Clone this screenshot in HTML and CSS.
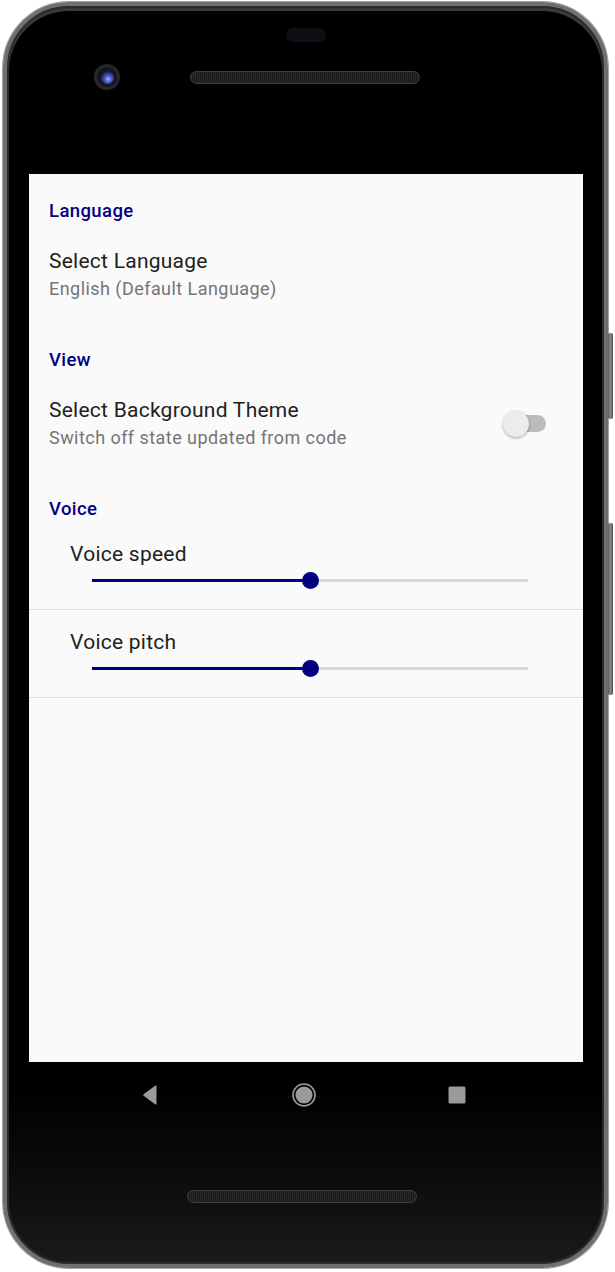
FILE: index.html
```html
<!DOCTYPE html>
<html lang="en">
<head>
<meta charset="utf-8">
<title>Settings</title>
<link rel="stylesheet" href="styles.css">
</head>
<body>
<div class="device">
  <div class="bezel-top">
    <div class="earpiece"></div>
    <div class="sensor-row">
      <div class="camera"><div class="lens"></div></div>
      <div class="grille"></div>
    </div>
  </div>

  <main class="screen">
    <section class="category">
      <h2 class="cat-title">Language</h2>
      <div class="pref">
        <div class="pref-text">
          <div class="pref-title">Select Language</div>
          <div class="pref-summary">English (Default Language)</div>
        </div>
      </div>
    </section>

    <section class="category">
      <h2 class="cat-title">View</h2>
      <div class="pref">
        <div class="pref-text">
          <div class="pref-title">Select Background Theme</div>
          <div class="pref-summary">Switch off state updated from code</div>
        </div>
        <div class="switch"><div class="switch-track"></div><div class="switch-thumb"></div></div>
      </div>
    </section>

    <section class="category">
      <h2 class="cat-title cat-title-voice">Voice</h2>
      <div class="seek-pref seek-first">
        <div class="seek-title">Voice speed</div>
        <div class="seek">
          <div class="seek-track"><div class="seek-fill" style="width:50%"></div><div class="seek-thumb" style="left:50%"></div></div>
        </div>
      </div>
      <div class="seek-pref">
        <div class="seek-title">Voice pitch</div>
        <div class="seek">
          <div class="seek-track"><div class="seek-fill" style="width:50%"></div><div class="seek-thumb" style="left:50%"></div></div>
        </div>
      </div>
    </section>
  </main>

  <div class="bezel-bottom">
    <nav class="navbar">
      <svg class="nav-icon" width="24" height="24" viewBox="0 0 24 24"><path d="M17.5 3.2 L17.5 20.8 Q17.5 22 16.4 21.4 L4.6 12.7 Q3.8 12 4.6 11.3 L16.4 2.6 Q17.5 2 17.5 3.2 Z" fill="#9a9a9a"/></svg>
      <svg class="nav-icon" width="24" height="24" viewBox="0 0 24 24"><circle cx="12" cy="12" r="11" fill="none" stroke="#9a9a9a" stroke-width="1.6"/><circle cx="12" cy="12" r="8.6" fill="#9a9a9a"/></svg>
      <svg class="nav-icon" width="24" height="24" viewBox="0 0 24 24"><rect x="3.5" y="3.5" width="17" height="17" rx="1.5" fill="#9a9a9a"/></svg>
    </nav>
    <div class="grille grille-bottom"></div>
  </div>

  <span class="side-btn side-power"></span>
  <span class="side-btn side-volume"></span>
</div>
</body>
</html>
```

FILE: styles.css
```css
* { box-sizing: border-box; }

html, body {
  margin: 0;
  padding: 0;
  background: #ffffff;
}

body {
  width: 615px;
  height: 1272px;
  overflow: hidden;
  font-family: Roboto, "Noto Sans", "Liberation Sans", sans-serif;
}

.device {
  position: relative;
  width: 605px;
  height: 1266px;
  margin: 2px 0 0 3px;
  border: 4px solid #6f6f6f;
  border-radius: 66px;
  background: linear-gradient(180deg, #000 0%, #000 86%, #0c0c0c 93%, #1a1a1a 100%);
  box-shadow: 0 0 0 1px #a4a4a4, inset 0 0 0 2px #2b2b2b, inset 0 3px 0 2px #3a3a3a;
  padding: 0 21px 0 22px;
  display: flex;
  flex-direction: column;
}

/* top bezel */
.bezel-top {
  height: 168px;
  display: flex;
  flex-direction: column;
  align-items: center;
}

.earpiece {
  width: 40px;
  height: 14px;
  margin-top: 22px;
  border-radius: 7px;
  background: #0e0e14;
}

.sensor-row {
  align-self: stretch;
  margin-top: 22px;
  height: 26px;
  display: flex;
  align-items: center;
}

.camera {
  width: 26px;
  height: 26px;
  margin-left: 65px;
  border-radius: 50%;
  background: #15161c;
  border: 3px solid #26272d;
  display: flex;
  align-items: center;
  justify-content: center;
}

.lens {
  width: 13px;
  height: 13px;
  border-radius: 50%;
  background: radial-gradient(circle at 55% 62%, #a8b4ff 0%, #4a5cc8 30%, #1a2050 70%, #0a0a14 100%);
}

.grille {
  width: 230px;
  height: 13px;
  margin-left: 70px;
  border-radius: 7px;
  background: repeating-linear-gradient(90deg, #2a2a2a 0 1px, #1a1a1a 1px 2px);
  border: 1px solid #3f3f3f;
}

/* screen */
.screen {
  width: 554px;
  height: 888px;
  background: #fafafa;
  flex: none;
}

.category {
  display: flex;
  flex-direction: column;
}

.cat-title {
  margin: 0;
  padding: 25px 0 0 20px;
  height: 49px;
  font-size: 18.5px;
  letter-spacing: 0.4px;
  line-height: 24px;
  font-weight: 500;
  color: #000080;
}

.cat-title-voice {
  height: 47px;
}

.pref {
  display: flex;
  align-items: center;
  padding: 24px 36px 22px 20px;
}

.pref-text {
  flex: 1;
  display: flex;
  flex-direction: column;
}

.pref-title {
  font-size: 21px;
  letter-spacing: 0.25px;
  line-height: 28px;
  color: #212121;
}

.pref-summary {
  margin-top: 2px;
  font-size: 18px;
  letter-spacing: 0.45px;
  line-height: 24px;
  color: #757575;
}

/* switch */
.switch {
  position: relative;
  width: 44px;
  height: 28px;
  display: flex;
  align-items: center;
  margin-top: 1px;
}

.switch-track {
  width: 40px;
  height: 17px;
  margin-left: 3px;
  border-radius: 9px;
  background: #bcbcbc;
}

.switch-thumb {
  position: absolute;
  left: 0;
  top: 1px;
  width: 26px;
  height: 26px;
  border-radius: 50%;
  background: #ececec;
  box-shadow: 0 1px 3px rgba(0, 0, 0, 0.35);
}

/* seek bars */
.seek-pref {
  padding: 20px 55px 15px 41px;
  border-bottom: 1px solid #dedede;
}

.seek-first {
  padding-top: 23px;
}

.seek-title {
  font-size: 21px;
  letter-spacing: 0.25px;
  line-height: 24px;
  color: #212121;
}

.seek {
  height: 28px;
  padding-left: 22px;
  display: flex;
  align-items: center;
}

.seek-track {
  position: relative;
  flex: 1;
  height: 3px;
  background: #d8d8d8;
}

.seek-fill {
  height: 3px;
  background: #000080;
}

.seek-thumb {
  position: absolute;
  top: -7px;
  width: 17px;
  height: 17px;
  margin-left: -8px;
  border-radius: 50%;
  background: #000080;
}

/* bottom bezel */
.bezel-bottom {
  flex: 1;
  display: flex;
  flex-direction: column;
}

.navbar {
  margin: 21px 0 0 110px;
  width: 330px;
  display: flex;
  justify-content: space-between;
}

.nav-icon {
  display: block;
}

.grille-bottom {
  margin: 83px 0 0 158px;
}

/* side buttons */
.side-btn {
  position: absolute;
  right: -9px;
  width: 5px;
  border-radius: 2px;
  background: linear-gradient(90deg, #5a5a5a, #8a8a8a, #4a4a4a);
}

.side-power {
  top: 327px;
  height: 86px;
}

.side-volume {
  top: 517px;
  height: 172px;
}
```
